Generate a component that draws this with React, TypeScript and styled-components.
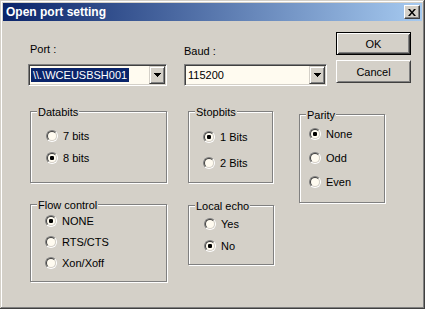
import React from 'react';
import styled, { createGlobalStyle } from 'styled-components';

const GlobalStyle = createGlobalStyle`
  html, body {
    margin: 0;
    padding: 0;
    background: #d4d0c8;
    overflow: hidden;
  }
  body {
    font-family: "Liberation Sans", Arial, sans-serif;
    font-size: 11px;
    color: #000;
  }
`;

const Window = styled.div`
  width: 425px;
  height: 309px;
  box-sizing: border-box;
  padding: 3px;
  background: #d4d0c8;
  box-shadow: inset -1px -1px #404040, inset 1px 1px #d4d0c8,
    inset -2px -2px #808080, inset 2px 2px #fff;
  display: flex;
  flex-direction: column;
`;

const TitleBar = styled.div`
  height: 18px;
  display: flex;
  align-items: center;
  justify-content: space-between;
  padding: 0 2px 0 3px;
  background: linear-gradient(to right, #0a246a, #a6caf0);
  color: #fff;
  font-weight: bold;
  font-size: 12px;
`;

const CloseButton = styled.button`
  width: 16px;
  height: 14px;
  padding: 0;
  box-sizing: border-box;
  background: #d4d0c8;
  border: 1px solid;
  border-color: #fff #404040 #404040 #fff;
  box-shadow: inset -1px -1px #808080;
  display: flex;
  align-items: center;
  justify-content: center;
`;

const Body = styled.div`
  flex: 1;
  display: flex;
  flex-direction: column;
  padding-top: 11px;
`;

const TopRow = styled.div`
  display: flex;
  align-items: flex-start;
  padding-left: 25px;
`;

const Field = styled.div<{ $width: number; $ml?: number }>`
  width: ${p => p.$width}px;
  margin-left: ${p => p.$ml || 0}px;
  display: flex;
  flex-direction: column;
`;

const FieldLabel = styled.div<{ $top: number; $bottom: number; $pl?: number }>`
  margin: ${p => p.$top}px 0 ${p => p.$bottom}px;
  padding-left: ${p => p.$pl || 0}px;
  line-height: 13px;
  height: 13px;
`;

const Combo = styled.div`
  box-sizing: border-box;
  height: 22px;
  padding: 1px;
  background: #fffbf0;
  border: 1px solid;
  border-color: #808080 #fff #fff #808080;
  box-shadow: inset 1px 1px #404040, inset -1px -1px #d4d0c8;
  display: flex;
  align-items: center;
`;

const ComboValue = styled.div<{ $ml: number }>`
  flex: 1;
  margin-left: ${p => p.$ml}px;
  display: flex;
  align-items: center;
  white-space: nowrap;
  overflow: hidden;
`;

const Selected = styled.span`
  background: #0a246a;
  color: #fff;
  padding: 0 2px;
  line-height: 14px;
`;

const DropButton = styled.div`
  width: 16px;
  height: 18px;
  box-sizing: border-box;
  background: #d4d0c8;
  border: 1px solid;
  border-color: #d4d0c8 #404040 #404040 #d4d0c8;
  box-shadow: inset 1px 1px #fff, inset -1px -1px #808080;
  display: flex;
  align-items: center;
  justify-content: center;
`;

const ButtonColumn = styled.div`
  margin-left: 9px;
  display: flex;
  flex-direction: column;
  gap: 5px;
`;

const Button = styled.button<{ $default?: boolean }>`
  width: 75px;
  height: 23px;
  box-sizing: border-box;
  padding: 0;
  font: 11px "Liberation Sans", Arial, sans-serif;
  color: #000;
  background: #d4d0c8;
  border: 1px solid;
  border-color: ${p => (p.$default ? '#000' : '#fff #404040 #404040 #fff')};
  box-shadow: ${p =>
    p.$default
      ? 'inset 1px 1px #fff, inset -1px -1px #404040, inset 2px 2px #d4d0c8, inset -2px -2px #808080'
      : 'inset 1px 1px #d4d0c8, inset -1px -1px #808080'};
`;

const GroupRow = styled.div`
  display: flex;
  align-items: flex-start;
  padding-left: 27px;
  margin-top: 25px;
`;

const Column = styled.div<{ $ml?: number; $mt?: number; $gap?: number }>`
  display: flex;
  flex-direction: column;
  margin-left: ${p => p.$ml || 0}px;
  margin-top: ${p => p.$mt || 0}px;
  gap: ${p => p.$gap || 0}px;
`;

const Group = styled.div<{ $w: number; $h: number; $pt: number; $pl: number; $gap: number }>`
  position: relative;
  box-sizing: border-box;
  width: ${p => p.$w}px;
  height: ${p => p.$h}px;
  border: 1px solid #808080;
  box-shadow: inset 1px 1px #fff, 1px 1px #fff;
  padding: ${p => p.$pt}px 0 0 ${p => p.$pl}px;
  display: flex;
  flex-direction: column;
  gap: ${p => p.$gap}px;
`;

const Caption = styled.span`
  position: absolute;
  top: -6px;
  left: 6px;
  padding: 0 1px;
  line-height: 13px;
  background: #d4d0c8;
`;

const Option = styled.label`
  display: flex;
  align-items: center;
  gap: 5px;
  height: 12px;
  line-height: 12px;
`;

const Radio = styled.span<{ $checked?: boolean }>`
  width: 12px;
  height: 12px;
  box-sizing: border-box;
  border-radius: 50%;
  border: 1px solid;
  border-color: #808080 #fff #fff #808080;
  flex: none;
  display: flex;

  &::before {
    content: '';
    flex: 1;
    border-radius: 50%;
    border: 1px solid;
    border-color: #404040 #d4d0c8 #d4d0c8 #404040;
    background: ${p =>
      p.$checked
        ? 'radial-gradient(circle, #000 0 2px, #fffbf0 2.4px)'
        : '#fffbf0'};
  }
`;

type GroupDef = {
  title: string;
  w: number;
  h: number;
  pt: number;
  pl: number;
  gap: number;
  options: string[];
  checked: number;
};

const groups: Record<string, GroupDef> = {
  databits: { title: 'Databits', w: 137, h: 72, pt: 18, pl: 15, gap: 10, options: ['7 bits', '8 bits'], checked: 1 },
  flow: { title: 'Flow control', w: 137, h: 78, pt: 10, pl: 14, gap: 9, options: ['NONE', 'RTS/CTS', 'Xon/Xoff'], checked: 0 },
  stopbits: { title: 'Stopbits', w: 85, h: 72, pt: 19, pl: 14, gap: 14, options: ['1 Bits', '2 Bits'], checked: 0 },
  echo: { title: 'Local echo', w: 86, h: 60, pt: 12, pl: 15, gap: 10, options: ['Yes', 'No'], checked: 1 },
  parity: { title: 'Parity', w: 86, h: 89, pt: 13, pl: 9, gap: 12, options: ['None', 'Odd', 'Even'], checked: 0 },
};

const RadioGroup = ({ g }: { g: GroupDef }) => (
  <Group $w={g.w} $h={g.h} $pt={g.pt} $pl={g.pl} $gap={g.gap}>
    <Caption>{g.title}</Caption>
    {g.options.map((o, i) => (
      <Option key={o}>
        <Radio $checked={i === g.checked} />
        {o}
      </Option>
    ))}
  </Group>
);

const Arrow = () => (
  <svg width="7" height="4" viewBox="0 0 7 4" shapeRendering="crispEdges">
    <path d="M0 0h7L3.5 4z" fill="#000" />
  </svg>
);

const App = () => {
  return (
    <>
      <GlobalStyle />
      <Window>
        <TitleBar>
          <span>Open port setting</span>
          <CloseButton>
            <svg width="8" height="7" viewBox="0 0 8 7">
              <path d="M0 0h2l2 2.4L6 0h2L5 3.5 8 7H6L4 4.6 2 7H0l3-3.5z" fill="#000" />
            </svg>
          </CloseButton>
        </TitleBar>
        <Body>
          <TopRow>
            <Field $width={139}>
              <FieldLabel $top={11} $bottom={8} $pl={2}>Port :</FieldLabel>
              <Combo>
                <ComboValue $ml={1}>
                  <Selected>{'\\\\.\\WCEUSBSH001'}</Selected>
                </ComboValue>
                <DropButton>
                  <Arrow />
                </DropButton>
              </Combo>
            </Field>
            <Field $width={143} $ml={17}>
              <FieldLabel $top={13} $bottom={6}>Baud :</FieldLabel>
              <Combo>
                <ComboValue $ml={2}>115200</ComboValue>
                <DropButton>
                  <Arrow />
                </DropButton>
              </Combo>
            </Field>
            <ButtonColumn>
              <Button $default>OK</Button>
              <Button>Cancel</Button>
            </ButtonColumn>
          </TopRow>
          <GroupRow>
            <Column $gap={21}>
              <RadioGroup g={groups.databits} />
              <RadioGroup g={groups.flow} />
            </Column>
            <Column $ml={21} $gap={22}>
              <RadioGroup g={groups.stopbits} />
              <RadioGroup g={groups.echo} />
            </Column>
            <Column $ml={25} $mt={3}>
              <RadioGroup g={groups.parity} />
            </Column>
          </GroupRow>
        </Body>
      </Window>
    </>
  );
};

export default App;
